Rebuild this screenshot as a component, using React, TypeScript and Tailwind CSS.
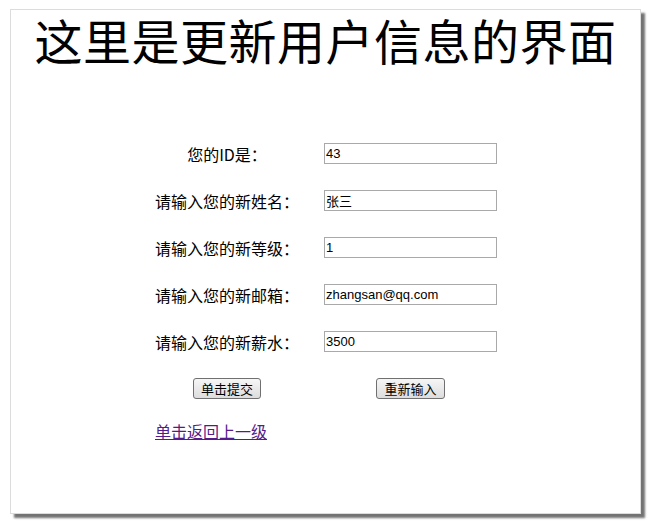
import React from 'react'

// Update-user form inside a framed window
const FIELDS: { label: string; value: string }[] = [
  { label: '您的ID是：', value: '43' },
  { label: '请输入您的新姓名：', value: '张三' },
  { label: '请输入您的新等级：', value: '1' },
  { label: '请输入您的新邮箱：', value: 'zhangsan@qq.com' },
  { label: '请输入您的新薪水：', value: '3500' },
]

const CJK = "font-['Noto_Sans_CJK_SC',sans-serif]"

function Btn({ children }: { children: React.ReactNode }) {
  return (
    <button
      type="button"
      className={`${CJK} h-[21px] px-[7px] text-[13px] leading-none text-black rounded-[3px] border border-[#707070] bg-gradient-to-b from-[#f6f6f6] to-[#dddddd]`}
    >
      {children}
    </button>
  )
}

export default function App() {
  return (
    <div className="w-[652px] h-[525px] bg-white overflow-hidden pt-[9px] pl-[10px]">
      <div className="w-[631px] h-[505px] bg-white border border-[#dcdcdc] shadow-[4px_4px_2px_rgba(0,0,0,0.55)]">
        <h1 className={`${CJK} mt-[5px] text-center text-[48px] leading-[48px] tracking-[0.5px] font-normal text-black`}>
          这里是更新用户信息的界面
        </h1>

        <div className="mt-[67px] ml-[122px] grid grid-cols-[188px_175px] gap-x-[2px] auto-rows-[47px]">
          {FIELDS.map((f) => (
            <React.Fragment key={f.label}>
              <div className={`${CJK} flex items-center justify-center text-[16px] text-black`}>{f.label}</div>
              <div className="flex items-center justify-center">
                <input
                  readOnly
                  value={f.value}
                  className="w-[173px] h-[21px] border border-[#a9a9a9] px-[1px] text-[13px] text-black font-['Liberation_Sans','Noto_Sans_CJK_SC',sans-serif] outline-none"
                />
              </div>
            </React.Fragment>
          ))}
          <div className="flex items-center justify-center">
            <Btn>单击提交</Btn>
          </div>
          <div className="flex items-center justify-center">
            <Btn>重新输入</Btn>
          </div>
          <div className="col-span-2 flex items-center pl-[22px] pb-[9px]">
            <a href="#" className={`${CJK} text-[16px] text-[#551a8b] underline`}>
              单击返回上一级
            </a>
          </div>
        </div>
      </div>
    </div>
  )
}
